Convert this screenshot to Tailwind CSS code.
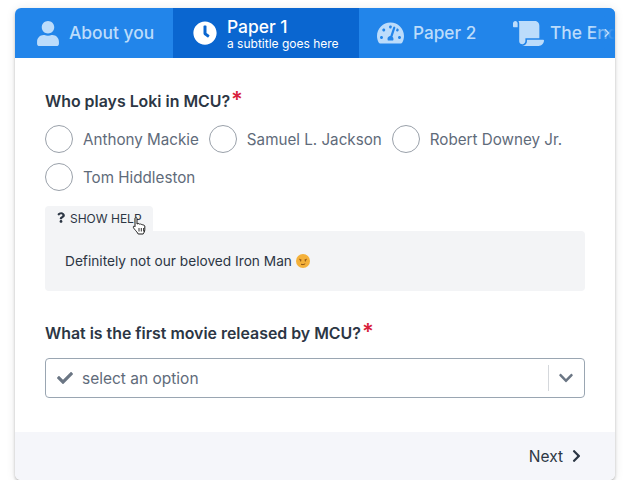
<!DOCTYPE html>
<html lang="en">
<head>
    <meta charset="UTF-8">
    <meta name="viewport" content="width=device-width, initial-scale=1.0">
    <title>Form wizard</title>
    <script src="https://cdn.jsdelivr.net/npm/@tailwindcss/browser@4"></script>
</head>
<body class="bg-white font-['Inter',sans-serif] overflow-hidden">
    <div class="pt-2 px-[15px]">
        <div class="h-[472px] w-[600px] flex flex-col bg-white rounded-md overflow-hidden shadow-[0_2px_3px_rgba(0,0,0,0.22),0_1px_10px_rgba(0,0,0,0.1)]">
            <!-- tabs -->
            <div class="relative h-[50px] shrink-0 flex bg-[#2285ea] text-[#bcdcfb] overflow-hidden">
                <div class="w-[158px] shrink-0 flex items-center pl-[22px] gap-[10px]">
                    <svg class="w-[22px] h-[25px] fill-current" viewBox="0 0 448 512"><path d="M224 256c70.7 0 128-57.3 128-128S294.7 0 224 0 96 57.3 96 128s57.3 128 128 128zm89.6 32h-16.7c-22.2 10.2-46.9 16-72.9 16s-50.6-5.8-72.9-16h-16.7C60.2 288 0 348.2 0 422.4V464c0 26.5 21.5 48 48 48h352c26.5 0 48-21.5 48-48v-41.6c0-74.2-60.2-134.4-134.4-134.4z"/></svg>
                    <span class="text-[17.4px] font-medium">About you</span>
                </div>
                <div class="w-[186px] shrink-0 flex items-center pl-5 gap-[10px] bg-[#0a66d0] text-white">
                    <svg class="w-6 h-6 fill-current" viewBox="0 0 512 512"><path d="M256,8C119,8,8,119,8,256S119,504,256,504,504,393,504,256,393,8,256,8Zm92.49,313h0l-20,25a16,16,0,0,1-22.49,2.5h0l-67-49.72a40,40,0,0,1-15-31.23V112a16,16,0,0,1,16-16h32a16,16,0,0,1,16,16V256l58,42.5A16,16,0,0,1,348.49,321Z"/></svg>
                    <div class="flex flex-col">
                        <span class="text-[17.4px] font-medium leading-[21px]">Paper 1</span>
                        <span class="text-xs leading-[13px]">a subtitle goes here</span>
                    </div>
                </div>
                <div class="w-[136px] shrink-0 flex items-center pl-[18px] gap-[9px]">
                    <svg class="w-[27px] h-6 fill-current" viewBox="0 0 576 512"><path d="M288 32C128.94 32 0 160.94 0 320c0 52.8 14.25 102.26 39.06 144.8 5.61 9.62 16.3 15.2 27.44 15.2h443c11.14 0 21.83-5.58 27.44-15.2C561.75 422.26 576 372.8 576 320c0-159.06-128.94-288-288-288zm0 64c14.71 0 26.58 10.13 30.32 23.65-1.11 2.26-2.64 4.23-3.45 6.67l-9.22 27.67c-5.13 3.49-10.97 6.01-17.64 6.01-17.67 0-32-14.33-32-32S270.33 96 288 96zM96 384c-17.67 0-32-14.33-32-32s14.33-32 32-32 32 14.33 32 32-14.33 32-32 32zm48-160c-17.67 0-32-14.33-32-32s14.33-32 32-32 32 14.33 32 32-14.33 32-32 32zm246.77-72.41l-61.33 184C343.13 347.33 352 364.54 352 384c0 11.72-3.38 22.55-8.88 32H232.88c-5.5-9.45-8.88-20.28-8.88-32 0-33.94 26.5-61.43 59.9-63.59l61.34-184.01c4.17-12.56 17.73-19.45 30.36-15.17 12.57 4.19 19.35 17.79 15.17 30.36zm14.66 57.2l15.52-46.55c3.47-1.29 7.13-2.23 11.05-2.23 17.67 0 32 14.33 32 32s-14.33 32-32 32c-11.38-.01-20.89-6.28-26.57-15.22zM480 384c-17.67 0-32-14.33-32-32s14.33-32 32-32 32 14.33 32 32-14.33 32-32 32z"/></svg>
                    <span class="text-[17.2px] font-medium">Paper 2</span>
                </div>
                <div class="shrink-0 flex items-center pl-[18px] gap-[6px]">
                    <svg class="w-[31px] h-[25px] fill-current" viewBox="0 0 640 512"><path d="M48 0C21.53 0 0 21.53 0 48v64c0 8.84 7.16 16 16 16h80V48C96 21.53 74.47 0 48 0zm208 412.57V352h288V96c0-52.94-43.06-96-96-96H111.59C121.74 13.41 128 29.92 128 48v368c0 38.87 34.65 69.65 74.75 63.12C234.26 474 256 444.46 256 412.57zM288 384v32c0 52.93-43.06 96-96 96h336c61.86 0 112-50.14 112-112 0-8.84-7.16-16-16-16H288z"/></svg>
                    <span class="text-[17.4px] font-medium whitespace-nowrap">The End</span>
                </div>
                <div class="absolute right-0 top-0 h-full w-[24px] flex items-center justify-end pr-[5px] bg-gradient-to-r from-transparent to-[#2285ea]">
                    <svg class="w-[6px] h-[10px] fill-current" viewBox="0 0 320 512"><path d="M285.476 272.971L91.132 467.314c-9.373 9.373-24.569 9.373-33.941 0l-22.667-22.667c-9.357-9.357-9.375-24.522-.04-33.901L188.505 256 34.484 101.255c-9.335-9.379-9.317-24.544.04-33.901l22.667-22.667c9.373-9.373 24.569-9.373 33.941 0L285.475 239.03c9.373 9.372 9.373 24.568.001 33.941z"/></svg>
                </div>
            </div>

            <!-- body -->
            <div class="flex-1 px-[30px] pt-8">
                <h2 class="flex text-[15.9px] font-semibold text-[#2c3644] leading-6 h-6">Who plays Loki in MCU?<span class="text-[#d8213b] text-[22px] leading-5 ml-[1px] -mt-px">*</span></h2>

                <div class="mt-[11px] flex flex-wrap gap-x-[10px] gap-y-[10px] text-[15.2px] text-[#5f6b7a]">
                    <label class="h-7 flex items-center gap-[10px]"><span class="w-7 h-7 rounded-full border border-[#9aa1aa]"></span><span class="pt-[2px]">Anthony Mackie</span></label>
                    <label class="h-7 flex items-center gap-[10px]"><span class="w-7 h-7 rounded-full border border-[#9aa1aa]"></span><span class="pt-[2px]">Samuel L. Jackson</span></label>
                    <label class="h-7 flex items-center gap-[10px]"><span class="w-7 h-7 rounded-full border border-[#9aa1aa]"></span><span class="pt-[2px]">Robert Downey Jr.</span></label>
                    <label class="h-7 flex items-center gap-[10px]"><span class="w-7 h-7 rounded-full border border-[#9aa1aa]"></span><span class="pt-[2px]">Tom Hiddleston</span></label>
                </div>

                <div class="mt-[15px] relative">
                    <div class="w-[108px] h-[25px] bg-[#f3f4f6] rounded-t flex items-center pl-3 gap-[5px] text-[#2c3644]">
                        <svg class="w-2 h-[13px] fill-current -mt-[2px]" viewBox="0 0 384 512"><path d="M202.021 0C122.202 0 70.503 32.703 29.914 91.026c-7.363 10.58-5.093 25.086 5.178 32.874l43.138 32.709c10.373 7.865 25.132 6.026 33.253-4.148 25.049-31.381 43.63-49.449 82.757-49.449 30.764 0 68.816 19.799 68.816 49.631 0 22.552-18.617 34.134-48.993 51.164-35.423 19.86-82.299 44.576-82.299 106.405V320c0 13.255 10.745 24 24 24h72.471c13.255 0 24-10.745 24-24v-5.773c0-42.86 125.268-44.645 125.268-160.627C377.504 66.256 286.902 0 202.021 0zM192 373.459c-38.196 0-69.271 31.075-69.271 69.271 0 38.195 31.075 69.27 69.271 69.27s69.271-31.075 69.271-69.271-31.075-69.27-69.271-69.27z"/></svg>
                        <span class="text-xs whitespace-nowrap">SHOW HELP</span>
                    </div>
                    <div class="h-[60px] bg-[#f3f4f6] rounded-b rounded-tr flex items-center px-5 gap-1 text-[13.7px] text-[#2c3644]">
                        Definitely not our beloved Iron Man
                        <svg class="w-[14px] h-[14px]" viewBox="0 0 14 14"><circle cx="7" cy="7" r="7" fill="#f4b13a"/><path d="M3 5.2l2.4.5M8.600 5.700l2.400-.5" stroke="#a8651a" stroke-width="1" fill="none"/><circle cx="4.600" cy="6.700" r=".8" fill="#8a5316"/><circle cx="9.400" cy="6.700" r=".8" fill="#8a5316"/><path d="M5 10.200c1.400.6 2.800.5 4.200-.4" stroke="#8a5316" stroke-width="1" fill="none"/></svg>
                    </div>
                    <!-- mouse pointer from the capture -->
                    <svg class="absolute left-[87px] top-[11px] w-4 h-[18px]" viewBox="0 0 16 18"><path d="M3 1.500c0-1.200 2-1.200 2 0V7l1-.4c.6-.2 1.200 0 1.400.5l.3-.1c.7-.3 1.300 0 1.500.5.7-.3 1.400 0 1.600.6.9-.3 1.800.2 2 1v3.600c0 2-1.200 3.300-1.600 4.300H6.200C5.600 15.700 4 14 2.600 12.300 1.500 11 1 10 1.500 9.400c.5-.5 1.100-.1 1.500.4z" fill="#fff" stroke="#1b1b1b" stroke-width="1" stroke-linejoin="round"/><path d="M7 11v3.500M9.300 11v3.500M11.600 11v3.500" stroke="#1b1b1b" stroke-width=".9"/></svg>
                </div>

                <h2 class="mt-[31px] flex text-[15.9px] font-semibold text-[#2c3644] leading-6 h-6">What is the first movie released by MCU?<span class="text-[#d8213b] text-[22px] leading-5 ml-[1px] -mt-px">*</span></h2>

                <div class="mt-3 h-10 border border-[#9aa6b2] rounded flex items-center text-[#5f6b7a]">
                    <svg class="ml-[11px] w-4 h-4 fill-[#6b7684]" viewBox="0 0 512 512"><path d="M173.898 439.404l-166.4-166.4c-9.997-9.997-9.997-26.206 0-36.204l36.203-36.204c9.997-9.998 26.207-9.998 36.204 0L192 312.69 432.095 72.596c9.997-9.997 26.207-9.997 36.204 0l36.203 36.204c9.997 9.997 9.997 26.206 0 36.204l-294.4 294.401c-9.998 9.997-26.207 9.997-36.204-.001z"/></svg>
                    <span class="ml-[9px] flex-1 text-[15.5px] pt-[2px]">select an option</span>
                    <span class="w-px h-[26px] bg-[#d5d8dc]"></span>
                    <svg class="ml-[10px] mr-[11px] w-[14px] h-4 fill-[#6b7684]" viewBox="0 0 448 512"><path d="M207.029 381.476L12.686 187.132c-9.373-9.373-9.373-24.569 0-33.941l22.667-22.667c9.357-9.357 24.522-9.375 33.901-.04L224 284.505l154.745-154.021c9.379-9.335 24.544-9.317 33.901.04l22.667 22.667c9.373 9.373 9.373 24.569 0 33.941L240.971 381.476c-9.373 9.372-24.569 9.372-33.942 0z"/></svg>
                </div>
            </div>

            <!-- footer -->
            <div class="h-12 shrink-0 bg-[#f5f6fa] flex items-center justify-end pr-[34px] gap-[9px] text-[15.5px] text-[#2c3644]">
                <span class="pt-[2px]">Next</span>
                <svg class="w-[9px] h-[14px] fill-current" viewBox="0 0 320 512"><path d="M285.476 272.971L91.132 467.314c-9.373 9.373-24.569 9.373-33.941 0l-22.667-22.667c-9.357-9.357-9.375-24.522-.04-33.901L188.505 256 34.484 101.255c-9.335-9.379-9.317-24.544.04-33.901l22.667-22.667c9.373-9.373 24.569-9.373 33.941 0L285.475 239.03c9.373 9.372 9.373 24.568.001 33.941z"/></svg>
            </div>
        </div>
    </div>
</body>
</html>
